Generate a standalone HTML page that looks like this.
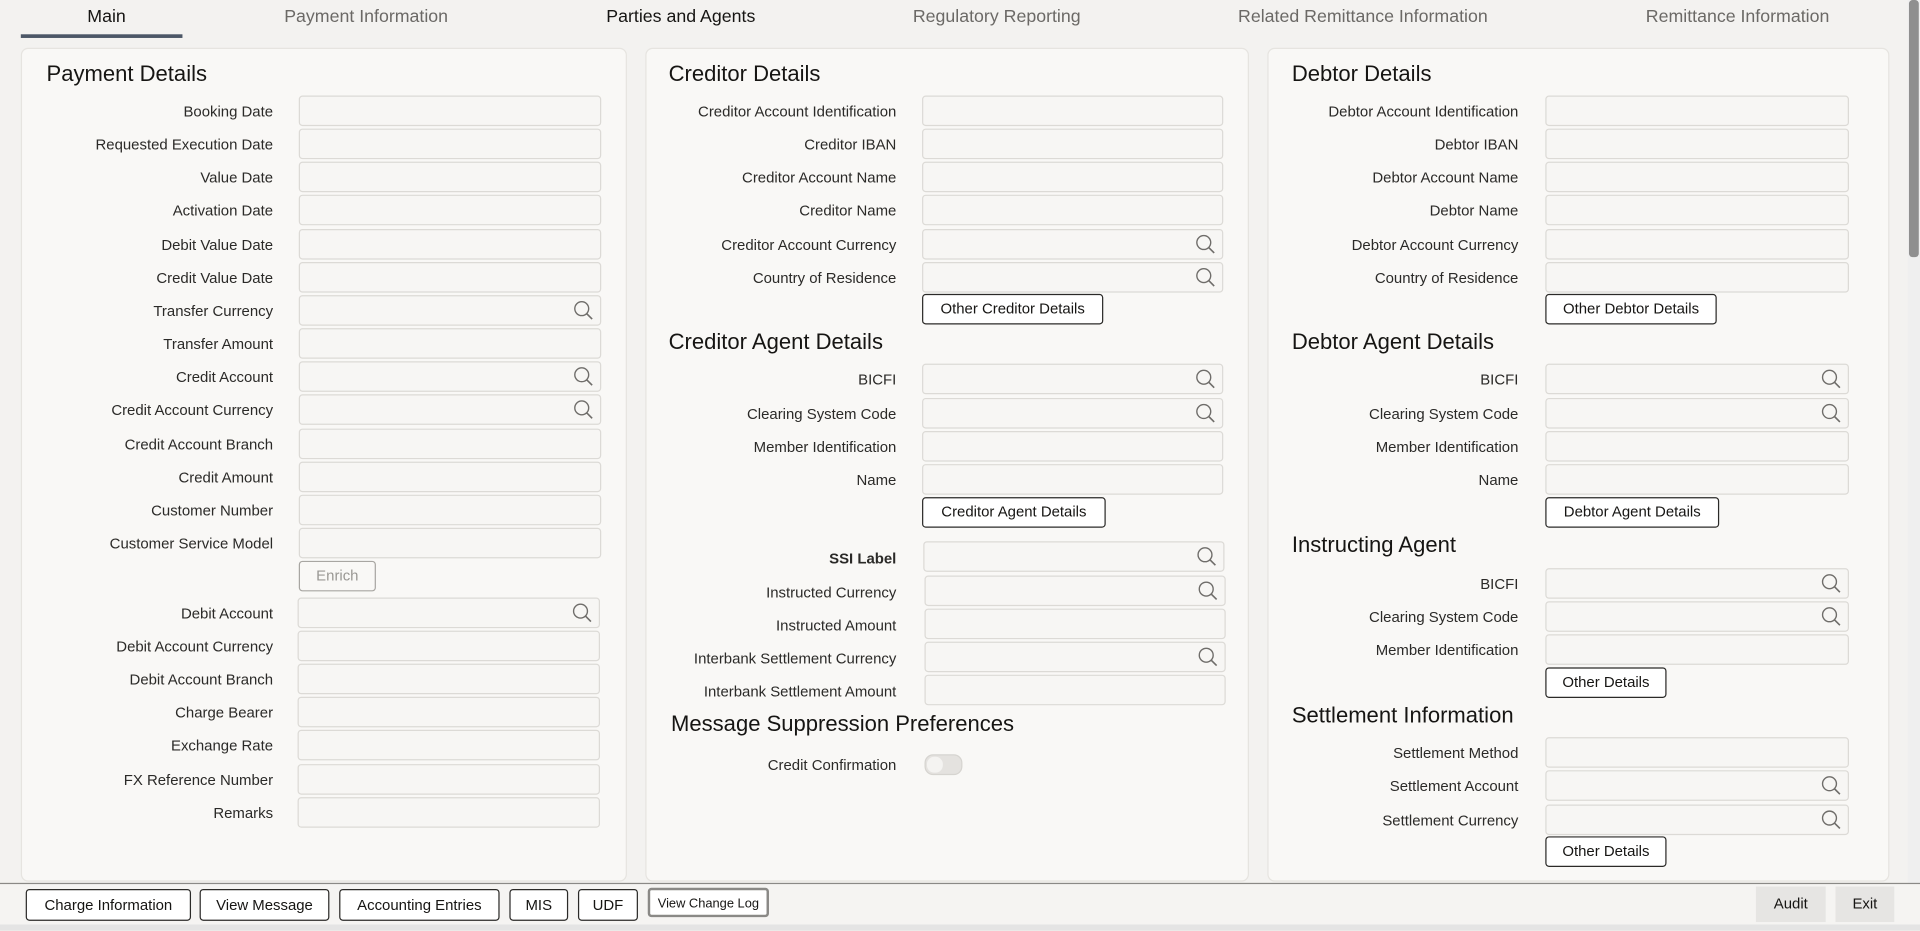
<!DOCTYPE html>
<html><head><meta charset="utf-8"><style>
html,body{margin:0;padding:0;width:1920px;height:930px;overflow:hidden;background:#f3f2f0;font-family:"Liberation Sans",sans-serif;color:#161513}
#w{position:absolute;left:0;top:0;width:1568px;height:760px;transform:scale(1.22449);transform-origin:0 0}
.a{position:absolute}
.tab{position:absolute;top:6px;font-size:14.5px;color:#6b6966;transform:translateX(-50%);white-space:nowrap}
.pan{position:absolute;top:39px;height:681px;background:#f9f8f6;border:1px solid #e6e4e0;border-radius:6px;box-sizing:border-box}
.h{position:absolute;font-size:18px;color:#161513;white-space:nowrap;line-height:22px;margin-top:2px}
.l{position:absolute;text-align:right;font-size:12.2px;line-height:16px;white-space:nowrap;color:#2b2a28;margin-top:1px}
.l1{left:0;width:223px}.l2{left:480px;width:252px}.l3{left:990px;width:250px}
.i{position:absolute;height:25px;background:#f7f6f4;border:1px solid #dcdad6;border-radius:3px;box-sizing:border-box}
.i1{left:244px;width:247px}.i2{left:753px;width:246px}.i3{left:1262px;width:248px}
.i svg{position:absolute;right:5px;top:3px}
.b{position:absolute;height:25px;border:1px solid #2b2a28;border-radius:3px;background:#fff;font-size:12.2px;line-height:23px;text-align:center;box-sizing:border-box;white-space:nowrap}
</style></head><body><div id="w">
<div class="tab" style="left:87px;color:#161513">Main</div>
<div class="a" style="left:17px;top:28px;width:132px;height:3px;background:#4c5767"></div>
<div class="tab" style="left:299px">Payment Information</div>
<div class="tab" style="left:556px;color:#161513">Parties and Agents</div>
<div class="tab" style="left:814px">Regulatory Reporting</div>
<div class="tab" style="left:1113px">Related Remittance Information</div>
<div class="tab" style="left:1419px">Remittance Information</div>
<div class="a" style="left:1558px;top:0;width:10px;height:755px;background:#efefef"></div>
<div class="a" style="left:1559px;top:0;width:8px;height:210px;background:#8f8f8f;border-radius:3px"></div>

<div class="pan" style="left:17px;width:495px"></div>
<div class="pan" style="left:527px;width:493px"></div>
<div class="pan" style="left:1035px;width:508px"></div>

<svg width="0" height="0" style="position:absolute"><defs><symbol id="s" viewBox="0 0 18 18"><circle cx="7.5" cy="7.5" r="6" fill="none" stroke="#6f6d6a" stroke-width="1.2"/><line x1="11.8" y1="11.8" x2="16.5" y2="16.5" stroke="#6f6d6a" stroke-width="1.4"/></symbol></defs></svg>

<!-- Panel 1 -->
<div class="h" style="left:38px;top:47px">Payment Details</div>
<div class="l l1" style="top:82px">Booking Date</div><div class="i i1" style="top:78px"></div>
<div class="l l1" style="top:109px">Requested Execution Date</div><div class="i i1" style="top:105px"></div>
<div class="l l1" style="top:136px">Value Date</div><div class="i i1" style="top:132px"></div>
<div class="l l1" style="top:163px">Activation Date</div><div class="i i1" style="top:159px"></div>
<div class="l l1" style="top:191px">Debit Value Date</div><div class="i i1" style="top:187px"></div>
<div class="l l1" style="top:218px">Credit Value Date</div><div class="i i1" style="top:214px"></div>
<div class="l l1" style="top:245px">Transfer Currency</div><div class="i i1" style="top:241px"><svg width="17" height="17"><use href="#s"/></svg></div>
<div class="l l1" style="top:272px">Transfer Amount</div><div class="i i1" style="top:268px"></div>
<div class="l l1" style="top:299px">Credit Account</div><div class="i i1" style="top:295px"><svg width="17" height="17"><use href="#s"/></svg></div>
<div class="l l1" style="top:326px">Credit Account Currency</div><div class="i i1" style="top:322px"><svg width="17" height="17"><use href="#s"/></svg></div>
<div class="l l1" style="top:354px">Credit Account Branch</div><div class="i i1" style="top:350px"></div>
<div class="l l1" style="top:381px">Credit Amount</div><div class="i i1" style="top:377px"></div>
<div class="l l1" style="top:408px">Customer Number</div><div class="i i1" style="top:404px"></div>
<div class="l l1" style="top:435px">Customer Service Model</div><div class="i i1" style="top:431px"></div>
<div class="b" style="left:244px;top:458px;width:63px;border-color:#a8a6a2;color:#9a9894;background:#f9f8f6">Enrich</div>
<div class="l l1" style="top:492px">Debit Account</div><div class="i i1" style="top:488px;left:243px"><svg width="17" height="17"><use href="#s"/></svg></div>
<div class="l l1" style="top:519px">Debit Account Currency</div><div class="i i1" style="top:515px;left:243px"></div>
<div class="l l1" style="top:546px">Debit Account Branch</div><div class="i i1" style="top:542px;left:243px"></div>
<div class="l l1" style="top:573px">Charge Bearer</div><div class="i i1" style="top:569px;left:243px"></div>
<div class="l l1" style="top:600px">Exchange Rate</div><div class="i i1" style="top:596px;left:243px"></div>
<div class="l l1" style="top:628px">FX Reference Number</div><div class="i i1" style="top:624px;left:243px"></div>
<div class="l l1" style="top:655px">Remarks</div><div class="i i1" style="top:651px;left:243px"></div>

<!-- Panel 2 -->
<div class="h" style="left:546px;top:47px">Creditor Details</div>
<div class="l l2" style="top:82px">Creditor Account Identification</div><div class="i i2" style="top:78px"></div>
<div class="l l2" style="top:109px">Creditor IBAN</div><div class="i i2" style="top:105px"></div>
<div class="l l2" style="top:136px">Creditor Account Name</div><div class="i i2" style="top:132px"></div>
<div class="l l2" style="top:163px">Creditor Name</div><div class="i i2" style="top:159px"></div>
<div class="l l2" style="top:191px">Creditor Account Currency</div><div class="i i2" style="top:187px"><svg width="17" height="17"><use href="#s"/></svg></div>
<div class="l l2" style="top:218px">Country of Residence</div><div class="i i2" style="top:214px"><svg width="17" height="17"><use href="#s"/></svg></div>
<div class="b" style="left:753px;top:240px;width:148px">Other Creditor Details</div>
<div class="h" style="left:546px;top:266px">Creditor Agent Details</div>
<div class="l l2" style="top:301px">BICFI</div><div class="i i2" style="top:297px"><svg width="17" height="17"><use href="#s"/></svg></div>
<div class="l l2" style="top:329px">Clearing System Code</div><div class="i i2" style="top:325px"><svg width="17" height="17"><use href="#s"/></svg></div>
<div class="l l2" style="top:356px">Member Identification</div><div class="i i2" style="top:352px"></div>
<div class="l l2" style="top:383px">Name</div><div class="i i2" style="top:379px"></div>
<div class="b" style="left:753px;top:406px;width:150px">Creditor Agent Details</div>
<div class="l l2" style="top:447px;font-weight:bold">SSI Label</div><div class="i i2" style="top:442px;left:754px"><svg width="17" height="17"><use href="#s"/></svg></div>
<div class="l l2" style="top:475px">Instructed Currency</div><div class="i i2" style="top:470px;left:755px"><svg width="17" height="17"><use href="#s"/></svg></div>
<div class="l l2" style="top:502px">Instructed Amount</div><div class="i i2" style="top:497px;left:755px"></div>
<div class="l l2" style="top:529px">Interbank Settlement Currency</div><div class="i i2" style="top:524px;left:755px"><svg width="17" height="17"><use href="#s"/></svg></div>
<div class="l l2" style="top:556px">Interbank Settlement Amount</div><div class="i i2" style="top:551px;left:755px"></div>
<div class="h" style="left:548px;top:578px">Message Suppression Preferences</div>
<div class="l l2" style="top:616px">Credit Confirmation</div>
<div class="a" style="left:755px;top:616px;width:31px;height:17px;border-radius:7px;background:#e4e2df;border:1px solid #d6d4d0;box-sizing:border-box"><div class="a" style="left:1px;top:1px;width:13px;height:13px;border-radius:6px;background:#f4f3f1"></div></div>

<!-- Panel 3 -->
<div class="h" style="left:1055px;top:47px">Debtor Details</div>
<div class="l l3" style="top:82px">Debtor Account Identification</div><div class="i i3" style="top:78px"></div>
<div class="l l3" style="top:109px">Debtor IBAN</div><div class="i i3" style="top:105px"></div>
<div class="l l3" style="top:136px">Debtor Account Name</div><div class="i i3" style="top:132px"></div>
<div class="l l3" style="top:163px">Debtor Name</div><div class="i i3" style="top:159px"></div>
<div class="l l3" style="top:191px">Debtor Account Currency</div><div class="i i3" style="top:187px"></div>
<div class="l l3" style="top:218px">Country of Residence</div><div class="i i3" style="top:214px"></div>
<div class="b" style="left:1262px;top:240px;width:140px">Other Debtor Details</div>
<div class="h" style="left:1055px;top:266px">Debtor Agent Details</div>
<div class="l l3" style="top:301px">BICFI</div><div class="i i3" style="top:297px"><svg width="17" height="17"><use href="#s"/></svg></div>
<div class="l l3" style="top:329px">Clearing System Code</div><div class="i i3" style="top:325px"><svg width="17" height="17"><use href="#s"/></svg></div>
<div class="l l3" style="top:356px">Member Identification</div><div class="i i3" style="top:352px"></div>
<div class="l l3" style="top:383px">Name</div><div class="i i3" style="top:379px"></div>
<div class="b" style="left:1262px;top:406px;width:142px">Debtor Agent Details</div>
<div class="h" style="left:1055px;top:432px">Instructing Agent</div>
<div class="l l3" style="top:468px">BICFI</div><div class="i i3" style="top:464px"><svg width="17" height="17"><use href="#s"/></svg></div>
<div class="l l3" style="top:495px">Clearing System Code</div><div class="i i3" style="top:491px"><svg width="17" height="17"><use href="#s"/></svg></div>
<div class="l l3" style="top:522px">Member Identification</div><div class="i i3" style="top:518px"></div>
<div class="b" style="left:1262px;top:545px;width:99px">Other Details</div>
<div class="h" style="left:1055px;top:571px">Settlement Information</div>
<div class="l l3" style="top:606px">Settlement Method</div><div class="i i3" style="top:602px"></div>
<div class="l l3" style="top:633px">Settlement Account</div><div class="i i3" style="top:629px"><svg width="17" height="17"><use href="#s"/></svg></div>
<div class="l l3" style="top:661px">Settlement Currency</div><div class="i i3" style="top:657px"><svg width="17" height="17"><use href="#s"/></svg></div>
<div class="b" style="left:1262px;top:683px;width:99px">Other Details</div>

<!-- Footer -->
<div class="a" style="left:0;top:721px;width:1568px;height:34px;background:#f5f4f2;border-top:1px solid #8a8986"></div>
<div class="b" style="left:21px;top:726px;width:135px;height:26px;line-height:24px">Charge Information</div>
<div class="b" style="left:163px;top:726px;width:106px;height:26px;line-height:24px">View Message</div>
<div class="b" style="left:277px;top:726px;width:131px;height:26px;line-height:24px">Accounting Entries</div>
<div class="b" style="left:416px;top:726px;width:48px;height:26px;line-height:24px">MIS</div>
<div class="b" style="left:472px;top:726px;width:49px;height:26px;line-height:24px">UDF</div>
<div class="b" style="left:529px;top:725px;width:99px;height:24px;line-height:22px;font-size:10.5px;border:2px solid #8a8986">View Change Log</div>
<div class="a" style="left:1434px;top:724px;width:57px;height:29px;background:#e6e5e3;font-size:12.2px;line-height:29px;text-align:center">Audit</div>
<div class="a" style="left:1499px;top:724px;width:48px;height:29px;background:#e6e5e3;font-size:12.2px;line-height:29px;text-align:center">Exit</div>
<div class="a" style="left:0;top:755px;width:1568px;height:5px;background:#e4e4e4"></div>
</div></body></html>
